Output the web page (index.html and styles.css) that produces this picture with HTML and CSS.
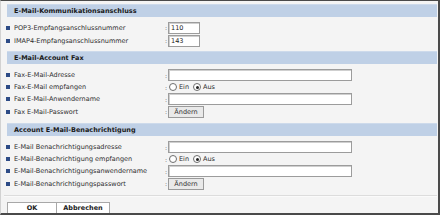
FILE: index.html
```html
<!DOCTYPE html>
<html lang="de">
<head>
    <meta charset="UTF-8">
    <title>E-Mail Einstellungen</title>
    <link rel="stylesheet" href="styles.css">
</head>
<body>
    <div class="frame">
        <div class="section first">
            <div class="head">E-Mail-Kommunikationsanschluss</div>
            <div class="row tall">
                <div class="label"><span class="bullet"></span>POP3-Empfangsanschlussnummer</div>
                <div class="colon">:</div>
                <input type="text" class="field port" value="110">
            </div>
            <div class="row tall">
                <div class="label"><span class="bullet"></span>IMAP4-Empfangsanschlussnummer</div>
                <div class="colon">:</div>
                <input type="text" class="field port" value="143">
            </div>
        </div>

        <div class="section">
            <div class="head">E-Mail-Account Fax</div>
            <div class="row">
                <div class="label"><span class="bullet"></span>Fax-E-Mail-Adresse</div>
                <div class="colon">:</div>
                <input type="text" class="field wide">
            </div>
            <div class="row">
                <div class="label"><span class="bullet"></span>Fax-E-Mail empfangen</div>
                <div class="colon">:</div>
                <label class="opt"><input type="radio" name="faxrecv" class="radio">Ein</label>
                <label class="opt"><input type="radio" name="faxrecv" class="radio" checked>Aus</label>
            </div>
            <div class="row">
                <div class="label"><span class="bullet"></span>Fax E-Mail-Anwendername</div>
                <div class="colon">:</div>
                <input type="text" class="field wide">
            </div>
            <div class="row tall">
                <div class="label"><span class="bullet"></span>Fax E-Mail-Passwort</div>
                <div class="colon">:</div>
                <button class="change">Ändern</button>
            </div>
        </div>

        <div class="section">
            <div class="head">Account E-Mail-Benachrichtigung</div>
            <div class="row">
                <div class="label"><span class="bullet"></span>E-Mail Benachrichtigungsadresse</div>
                <div class="colon">:</div>
                <input type="text" class="field wide">
            </div>
            <div class="row">
                <div class="label"><span class="bullet"></span>E-Mail-Benachrichtigung empfangen</div>
                <div class="colon">:</div>
                <label class="opt"><input type="radio" name="notify" class="radio">Ein</label>
                <label class="opt"><input type="radio" name="notify" class="radio" checked>Aus</label>
            </div>
            <div class="row">
                <div class="label"><span class="bullet"></span>E-Mail-Benachrichtigungsanwendername</div>
                <div class="colon">:</div>
                <input type="text" class="field wide">
            </div>
            <div class="row tall">
                <div class="label"><span class="bullet"></span>E-Mail-Benachrichtigungspasswort</div>
                <div class="colon">:</div>
                <button class="change">Ändern</button>
            </div>
        </div>

        <div class="sep"></div>

        <div class="actions">
            <button class="act ok">OK</button>
            <button class="act cancel">Abbrechen</button>
        </div>
    </div>
</body>
</html>
```

FILE: styles.css
```css
* {
    margin: 0;
    padding: 0;
    box-sizing: border-box;
}

body {
    font-family: "DejaVu Sans", Verdana, sans-serif;
    font-size: 6.5px;
    color: #2e2e2e;
    background: #f4f4f4;
}

.frame {
    width: 440px;
    height: 215px;
    overflow: hidden;
    background: #f4f4f4;
    border-top: 1px solid #4a4a4a;
    border-right: 2px solid #4a4a4a;
    border-bottom: 2px solid #4a4a4a;
    border-left: 1px solid #d2d2d2;
    padding: 3px 1px 0 6px;
}

.section {
    margin-bottom: 5px;
}

.section.first {
    margin-bottom: 4px;
}

.head {
    height: 13px;
    line-height: 13px;
    background: #bfd0e6;
    border-top: 1px solid #cddaeb;
    padding-left: 7px;
    font-weight: bold;
    font-size: 6.5px;
    color: #1a1a1a;
    margin-bottom: 5px;
}

.first .head {
    margin-bottom: 4px;
}

.row {
    height: 12px;
    display: flex;
    align-items: center;
}

.row.tall {
    height: 13px;
}

.label {
    width: 158px;
    display: flex;
    align-items: center;
    white-space: nowrap;
}

.bullet {
    width: 4px;
    height: 4px;
    background: #2d4b86;
    margin-left: -1px;
    margin-right: 4px;
}

.colon {
    width: 3px;
    font-size: 6px;
    color: #555;
}

.field {
    height: 12px;
    border: 1px solid #9c9c9c;
    box-shadow: inset 1px 1px 0 #cfcfcf;
    background: #fff;
    font-family: "DejaVu Sans", Verdana, sans-serif;
    font-size: 6.5px;
    color: #222;
    padding: 0 2px;
    outline: none;
}

.port {
    width: 32px;
}

.wide {
    width: 184px;
}

.opt {
    display: flex;
    align-items: center;
    margin-right: 3px;
}

.radio {
    appearance: none;
    width: 8px;
    height: 8px;
    border: 1px solid #6e6e6e;
    border-radius: 50%;
    background: #fff;
    margin: 0 2px 0 1px;
    position: relative;
}

.radio:checked::after {
    content: "";
    position: absolute;
    left: 1.5px;
    top: 1.5px;
    width: 3px;
    height: 3px;
    border-radius: 50%;
    background: #222;
}

.change {
    width: 36px;
    height: 12px;
    border: 1px solid #9a9a9a;
    background: #e9e9e9;
    font-family: "DejaVu Sans", Verdana, sans-serif;
    font-size: 6.5px;
    color: #333;
}

.sep {
    height: 2px;
    border-top: 1px solid #dcdcdc;
    border-bottom: 1px solid #fafafa;
    margin: 1px 0 5px -3px;
}

.actions {
    display: flex;
}

.act {
    height: 12px;
    border: 1px solid #a8a8a8;
    background: #fff;
    font-family: "DejaVu Sans", Verdana, sans-serif;
    font-weight: bold;
    font-size: 6.5px;
    color: #222;
}

.ok {
    width: 50px;
}

.cancel {
    width: 53px;
    border-left: none;
}
```
